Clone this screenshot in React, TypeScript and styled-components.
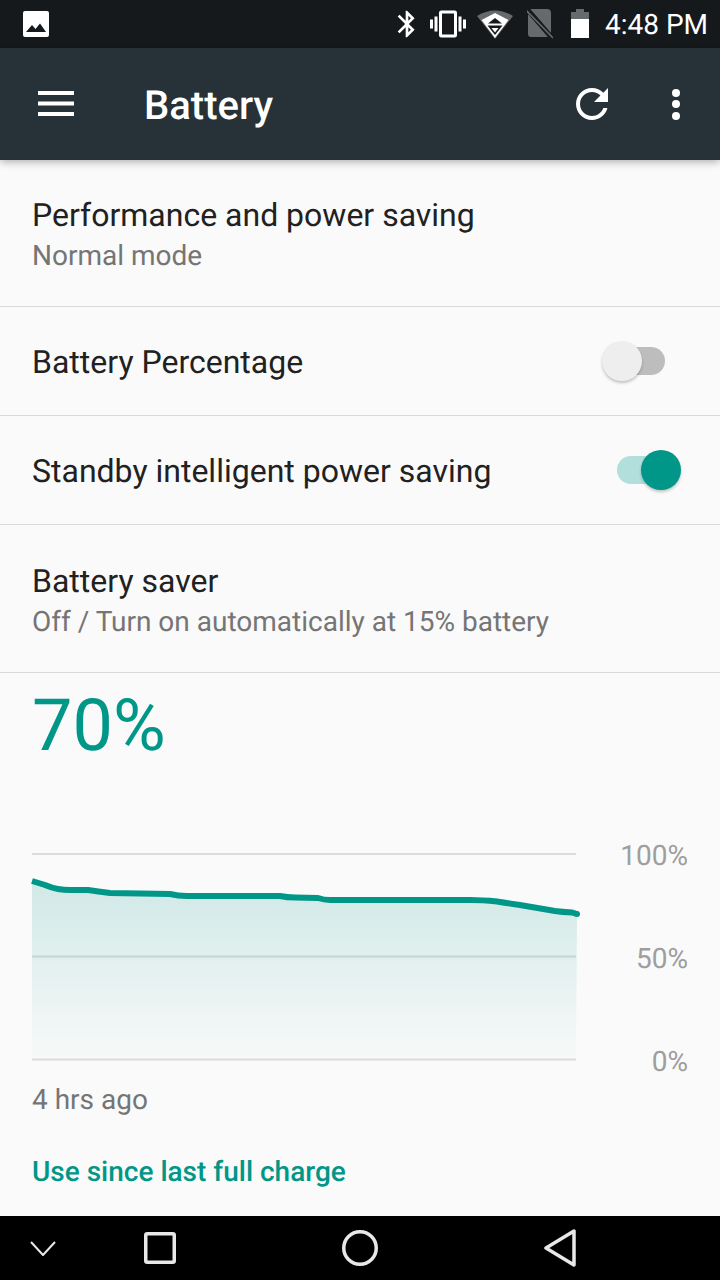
import React from 'react';
import styled, { createGlobalStyle } from 'styled-components';

const Global = createGlobalStyle`
  html, body { margin: 0; padding: 0; background: #fafafa; }
  body {
    font-family: Roboto, "Liberation Sans", sans-serif;
    -webkit-font-smoothing: antialiased;
    text-rendering: geometricPrecision;
  }
  * { box-sizing: border-box; }
`;

const Page = styled.div`
  width: 720px;
  height: 1280px;
  display: flex;
  flex-direction: column;
  background: #fafafa;
  overflow: hidden;
`;

const StatusBar = styled.header`
  height: 48px;
  flex: none;
  background: #15191c;
  display: flex;
  align-items: center;
  padding: 0 12px 0 23px;
`;
const StatusIcons = styled.div`
  margin-left: auto;
  display: flex;
  align-items: center;
`;
const Clock = styled.span`
  color: #fff;
  font-size: 28px;
  font-weight: 400;
  margin-left: 15px;
  line-height: 48px;
  padding-top: 1px;
`;

const Toolbar = styled.div`
  height: 112px;
  flex: none;
  background: #263238;
  display: flex;
  align-items: center;
  padding: 0 40px 0 38px;
  box-shadow: 0 2px 8px rgba(0, 0, 0, 0.3);
  position: relative;
  z-index: 1;
`;
const Title = styled.h1`
  margin: 0 0 0 70px;
  color: #fff;
  font-size: 40px;
  font-weight: 500;
  line-height: 112px;
  padding-top: 3px;
`;
const ToolActions = styled.div`
  margin-left: auto;
  display: flex;
  align-items: center;
  gap: 56px;
`;

const Row = styled.section<{ $h: number }>`
  height: ${p => p.$h}px;
  flex: none;
  border-bottom: 1px solid #d8d8d8;
  padding: 0 32px;
  display: flex;
  align-items: center;
  justify-content: space-between;
`;
const RowText = styled.div`
  display: flex;
  flex-direction: column;
  gap: 3px;
  padding-top: 3px;
`;
const RowTitle = styled.div`
  color: #212121;
  font-size: 32px;
  line-height: 37px;
  padding-top: 2px;
`;
const RowSub = styled.div`
  color: #757575;
  font-size: 28px;
  line-height: 37px;
`;

const SwitchBox = styled.div`
  position: relative;
  width: 80px;
  height: 40px;
  margin-right: 6px;
`;
const Track = styled.div<{ $on?: boolean }>`
  position: absolute;
  left: 15px;
  top: 6px;
  width: 48px;
  height: 28px;
  border-radius: 14px;
  background: ${p => (p.$on ? '#b2dfdb' : '#bdbdbd')};
`;
const Thumb = styled.div<{ $on?: boolean }>`
  position: absolute;
  left: ${p => (p.$on ? '39px' : '0')};
  top: 0;
  width: 40px;
  height: 40px;
  border-radius: 50%;
  background: ${p => (p.$on ? '#009688' : '#eeeeee')};
  box-shadow: 0 2px 3px rgba(0, 0, 0, 0.22);
`;

const Main = styled.main`
  flex: 1;
  display: flex;
  flex-direction: column;
  padding: 0 32px;
`;
const Percent = styled.div`
  color: #009688;
  font-size: 72px;
  line-height: 84px;
  margin-top: 11px;
`;
const ChartRow = styled.div`
  display: flex;
  margin-top: 85px;
`;
const Labels = styled.div`
  width: 112px;
  height: 238px;
  margin-top: -13px;
  display: flex;
  flex-direction: column;
  justify-content: space-between;
  align-items: flex-end;
  color: #9e9e9e;
  font-size: 28px;
  line-height: 32px;
`;
const Ago = styled.div`
  color: #757575;
  font-size: 28px;
  line-height: 36px;
  margin-top: 4px;
`;
const ChargeLink = styled.div`
  color: #009688;
  font-size: 28px;
  font-weight: 500;
  line-height: 36px;
  margin-top: 36px;
`;

const NavBar = styled.nav`
  height: 64px;
  flex: none;
  background: #000;
  display: grid;
  grid-template-columns: 86px 148px 252px 148px;
  align-items: center;
  justify-items: center;
`;

const ICON = '#ffffff';

const PictureIcon = () => (
  <svg width="26" height="26" viewBox="0 0 26 26">
    <rect width="26" height="26" rx="2" fill="#fff" />
    <path d="M3 21 L9 14 L12.5 18 L17 12.5 L23 21 Z" fill="#15191c" />
  </svg>
);
const BluetoothIcon = () => (
  <svg width="32" height="32" viewBox="0 0 24 24" fill={ICON}>
    <path d="M17.71 7.71L12 2h-1v7.59L6.41 5 5 6.41 10.59 12 5 17.59 6.41 19 11 14.41V22h1l5.71-5.71-4.3-4.29 4.3-4.29zM13 5.83l1.88 1.88L13 9.59V5.83zm1.88 10.46L13 18.17v-3.76l1.88 1.88z" />
  </svg>
);
const VibrateIcon = () => (
  <svg width="36" height="36" viewBox="0 0 24 24" fill={ICON} style={{ marginLeft: 7 }}>
    <path d="M0 15h2V9H0v6zm3 2h2V7H3v10zm19-8v6h2V9h-2zm-3 8h2V7h-2v10zM16.5 3h-9C6.67 3 6 3.67 6 4.5v15c0 .83.67 1.5 1.5 1.5h9c.83 0 1.5-.67 1.5-1.5v-15c0-.83-.67-1.5-1.5-1.5zM16 19H8V5h8v14z" />
  </svg>
);
const WifiIcon = () => (
  <svg width="36" height="30" viewBox="0 0 36 30" style={{ marginLeft: 11 }}>
    <path d="M0 7 Q18 -4 36 7 L18 30 Z" fill="#666a6c" />
    <path d="M4.5 11 L18 4 L31.5 11 L18 29 Z" fill="#fff" />
    <path d="M11 14.5 L18 9 L25 14.5 Z" fill="#15191c" />
    <path d="M10.5 16.5 H25.5 L18 26 Z" fill="#15191c" />
    <path d="M14.5 19 H21.5 L18 23.5 Z" fill="#fff" />
  </svg>
);
const NoSimIcon = () => (
  <svg width="26" height="30" viewBox="0 0 26 30" style={{ marginLeft: 14 }}>
    <path d="M3 0 H20 Q24 0 24 4 V25 Q24 28 20 28 H4 Q1 28 1 25 V3 Q1 0 3 0 Z" fill="#666a6c" />
    <path d="M0 0 L25 29" stroke="#15191c" strokeWidth="5" />
    <path d="M-1 1 L26 29" stroke="#666a6c" strokeWidth="1.6" />
  </svg>
);
const BatteryIcon = () => (
  <svg width="20" height="30" viewBox="0 0 20 30" style={{ marginLeft: 17 }}>
    <path d="M6 0 H14 V3 H19 V10 H1 V3 H6 Z" fill="#666a6c" />
    <rect x="1" y="10" width="18" height="19" fill="#fff" />
  </svg>
);
const MenuIcon = () => (
  <svg width="36" height="26" viewBox="0 0 36 26" fill="#fff">
    <rect y="0" width="36" height="4" />
    <rect y="10.5" width="36" height="4" />
    <rect y="21" width="36" height="4" />
  </svg>
);
const RefreshIcon = () => (
  <svg width="48" height="48" viewBox="0 0 24 24" fill="#fff">
    <path d="M17.65 6.35C16.2 4.9 14.21 4 12 4c-4.42 0-7.99 3.58-7.99 8s3.57 8 7.99 8c3.73 0 6.84-2.55 7.73-6h-2.08c-.82 2.33-3.04 4-5.65 4-3.31 0-6-2.69-6-6s2.69-6 6-6c1.66 0 3.14.69 4.22 1.78L13 11h7V4l-2.35 2.35z" />
  </svg>
);
const MoreIcon = () => (
  <svg width="8" height="48" viewBox="0 0 8 48" fill="#fff">
    <circle cx="4" cy="13" r="4" />
    <circle cx="4" cy="24" r="4" />
    <circle cx="4" cy="36" r="4" />
  </svg>
);

const curve =
  'M0 28 L13 32 Q20 35 26 36 Q32 37 38 37 L56 37 Q66 38.5 78 40 L138 41 Q146 43 155 43 L248 43 Q255 44.5 263 44.5 L286 45 Q292 47 298 47 L438 47 Q450 47 465 48.5 Q480 51 488 52 L523 58 Q530 59 540 59.5 L545 61';

const Chart = () => (
  <svg width="544" height="208" viewBox="0 0 544 208" style={{ overflow: 'visible', flex: 'none' }}>
    <defs>
      <linearGradient id="fade" x1="0" y1="0" x2="0" y2="1">
        <stop offset="0" stopColor="#009688" stopOpacity="0.17" />
        <stop offset="1" stopColor="#009688" stopOpacity="0.01" />
      </linearGradient>
    </defs>
    <path d="M0 1 H544 M0 103.5 H544 M0 206.5 H544" stroke="#dcdcdc" strokeWidth="2" fill="none" />
    <path d={`${curve} L544 206 L0 206 Z`} fill="url(#fade)" />
    <path d={curve} fill="none" stroke="#009688" strokeWidth="6" />
    <circle cx="545" cy="61" r="3" fill="#009688" />
  </svg>
);

const NavIcon = styled.svg`
  display: block;
  fill: none;
  stroke: #e8e8e8;
  stroke-linejoin: round;
`;

export default function App() {
  return (
    <Page>
      <Global />
      <StatusBar>
        <PictureIcon />
        <StatusIcons>
          <BluetoothIcon />
          <VibrateIcon />
          <WifiIcon />
          <NoSimIcon />
          <BatteryIcon />
          <Clock>4:48 PM</Clock>
        </StatusIcons>
      </StatusBar>
      <Toolbar>
        <MenuIcon />
        <Title>Battery</Title>
        <ToolActions>
          <RefreshIcon />
          <MoreIcon />
        </ToolActions>
      </Toolbar>
      <Row $h={147}>
        <RowText>
          <RowTitle>Performance and power saving</RowTitle>
          <RowSub>Normal mode</RowSub>
        </RowText>
      </Row>
      <Row $h={109}>
        <RowTitle>Battery Percentage</RowTitle>
        <SwitchBox>
          <Track />
          <Thumb />
        </SwitchBox>
      </Row>
      <Row $h={109}>
        <RowTitle>Standby intelligent power saving</RowTitle>
        <SwitchBox>
          <Track $on />
          <Thumb $on />
        </SwitchBox>
      </Row>
      <Row $h={148}>
        <RowText>
          <RowTitle>Battery saver</RowTitle>
          <RowSub>Off / Turn on automatically at 15% battery</RowSub>
        </RowText>
      </Row>
      <Main>
        <Percent>70%</Percent>
        <ChartRow>
          <Chart />
          <Labels>
            <span>100%</span>
            <span>50%</span>
            <span>0%</span>
          </Labels>
        </ChartRow>
        <Ago>4 hrs ago</Ago>
        <ChargeLink>Use since last full charge</ChargeLink>
      </Main>
      <NavBar>
        <NavIcon width="26" height="15" viewBox="0 0 26 15" strokeWidth="2">
          <path d="M1 1 L13 14 L25 1" />
        </NavIcon>
        <NavIcon width="32" height="32" viewBox="0 0 32 32" strokeWidth="3.5">
          <rect x="1.75" y="1.75" width="28.5" height="28.5" rx="1.5" />
        </NavIcon>
        <NavIcon width="36" height="36" viewBox="0 0 36 36" strokeWidth="3.5">
          <circle cx="18" cy="18" r="16.25" />
        </NavIcon>
        <NavIcon width="32" height="38" viewBox="0 0 32 38" strokeWidth="3.5">
          <path d="M30 2 V36 L2 19 Z" />
        </NavIcon>
      </NavBar>
    </Page>
  );
}
